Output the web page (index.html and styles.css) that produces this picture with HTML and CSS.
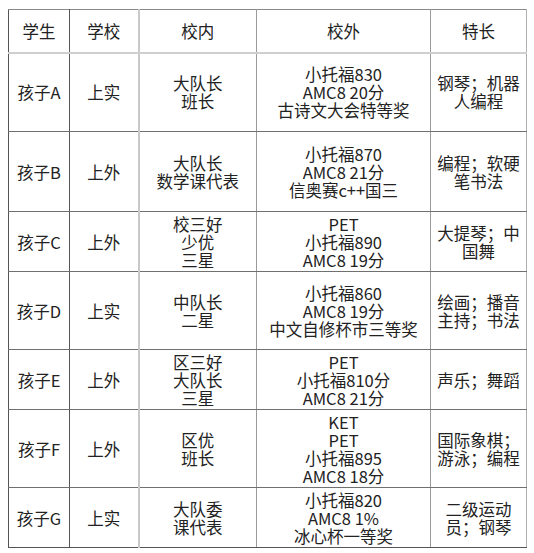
FILE: index.html
```html
<!DOCTYPE html>
<html lang="zh-CN">
<head>
<meta charset="utf-8">
<link rel="stylesheet" href="styles.css">
</head>
<body>
<table class="grid">
  <colgroup>
    <col class="c-name">
    <col class="c-school">
    <col class="c-in">
    <col class="c-out">
    <col class="c-skill">
  </colgroup>
  <thead>
    <tr class="r-head">
      <th>学生</th><th>学校</th><th>校内</th><th>校外</th><th>特长</th>
    </tr>
  </thead>
  <tbody>
    <tr class="r-tall">
      <td>孩子A</td><td>上实</td>
      <td>大队长<br>班长</td>
      <td>小托福830<br>AMC8 20分<br>古诗文大会特等奖</td>
      <td>钢琴；机器人编程</td>
    </tr>
    <tr class="r-tall2">
      <td>孩子B</td><td>上外</td>
      <td>大队长<br>数学课代表</td>
      <td>小托福870<br>AMC8 21分<br>信奥赛c++国三</td>
      <td>编程；软硬笔书法</td>
    </tr>
    <tr class="r-short">
      <td>孩子C</td><td>上外</td>
      <td>校三好<br>少优<br>三星</td>
      <td>PET<br>小托福890<br>AMC8 19分</td>
      <td>大提琴；中国舞</td>
    </tr>
    <tr class="r-mid">
      <td>孩子D</td><td>上实</td>
      <td>中队长<br>二星</td>
      <td>小托福860<br>AMC8 19分<br>中文自修杯市三等奖</td>
      <td>绘画；播音主持；书法</td>
    </tr>
    <tr class="r-short">
      <td>孩子E</td><td>上外</td>
      <td>区三好<br>大队长<br>三星</td>
      <td>PET<br>小托福810分<br>AMC8 21分</td>
      <td>声乐；舞蹈</td>
    </tr>
    <tr class="r-mid">
      <td>孩子F</td><td>上外</td>
      <td>区优<br>班长</td>
      <td>KET<br>PET<br>小托福895<br>AMC8 18分</td>
      <td>国际象棋；游泳；编程</td>
    </tr>
    <tr class="r-short">
      <td>孩子G</td><td>上实</td>
      <td>大队委<br>课代表</td>
      <td>小托福820<br>AMC8 1%<br>冰心杯一等奖</td>
      <td>二级运动员；钢琴</td>
    </tr>
  </tbody>
</table>
</body>
</html>
```
FILE: styles.css
```css
html, body {
  margin: 0;
  padding: 0;
  background: #ffffff;
}
body {
  padding: 9px 0 0 8px;
  font-family: "Noto Sans CJK SC", "Noto Sans", sans-serif;
  color: #222222;
}
.grid {
  border-collapse: collapse;
  table-layout: fixed;
  width: 518px;
  font-size: 16.5px;
  line-height: 18px;
  border-top: 1px solid #8a8a8a;
  border-left: 1px solid #555555;
  border-right: 1px solid #b0b0b0;
  border-bottom: 1px solid #555555;
}
.c-name { width: 61px; }
.c-school { width: 69px; }
.c-in { width: 118px; }
.c-out { width: 174px; }
.c-skill { width: 96px; }
.grid th,
.grid td {
  padding: 0 4px;
  text-align: center;
  vertical-align: middle;
  font-weight: normal;
  border-bottom: 1px solid #707070;
}
.grid th:nth-child(1),
.grid td:nth-child(1) {
  border-right: 1px solid #555555;
}
.grid th:nth-child(2),
.grid td:nth-child(2) {
  border-right: 2px solid #c9c9c9;
}
.grid th:nth-child(3),
.grid td:nth-child(3) {
  border-right: 1px solid #9a9a9a;
}
.grid th:nth-child(4),
.grid td:nth-child(4) {
  border-right: 1px solid #9a9a9a;
}
.grid th {
  border-bottom: 2px solid #cfcfcf;
}
.r-head { height: 43px; }
.r-tall { height: 79px; }
.r-tall2 { height: 80px; }
.r-mid { height: 78px; }
.r-short { height: 60px; }
.grid tbody tr:last-child td {
  border-bottom: 1px solid #555555;
}
```
